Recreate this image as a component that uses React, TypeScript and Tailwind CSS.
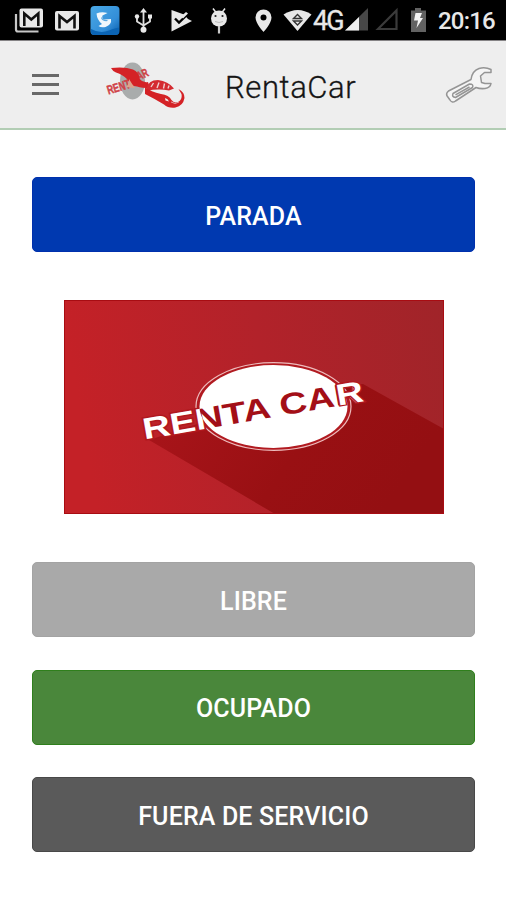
import { clsx } from "clsx";
import React from "react";

const STATUS_BUTTONS = [
  { id: "libre", label: "LIBRE", className: "bg-[#a9a9a9] border-[#a3a3a3]" },
  { id: "ocupado", label: "OCUPADO", className: "bg-[#4a873b] border-[#2f7f1c]" },
  { id: "fuera", label: "FUERA DE SERVICIO", className: "bg-[#5a5a5a] border-[#484848]" },
];

function ActionButton({ label, className }: { label: string; className: string }) {
  return (
    <button
      className={clsx(
        "flex h-[75px] w-full items-center justify-center rounded-[5px] border pt-1 text-[25px] font-medium tracking-[0.15px] text-white",
        className,
      )}
    >
      {label}
    </button>
  );
}

function StatusBar() {
  return (
    <div className="flex h-[41px] shrink-0 items-start border-b border-[#858385] bg-black text-[#e8e8e8]">
      {/* notifications */}
      <svg width="244" height="40" viewBox="0 0 244 40" className="shrink-0">
        {/* stacked mail */}
        <path d="M16 14v15.500q0 2 2 2H38.500" fill="none" stroke="#c8c8c8" strokeWidth="2.200" />
        <rect x="19.500" y="8.500" width="23.500" height="19" rx="2" fill="#e8e8e8" />
        <path d="M24.300 26V13.500l7 6 7-6V26" fill="none" stroke="#111" strokeWidth="2.600" />
        {/* mail */}
        <rect x="55" y="11" width="24" height="19.500" rx="2" fill="#e8e8e8" />
        <path d="M59.500 28.500V16l7.500 6 7.500-6v12.500" fill="none" stroke="#111" strokeWidth="2.600" />
        {/* app badge */}
        <defs>
          <linearGradient id="badge" x1="0" y1="0" x2="1" y2="1">
            <stop offset="0" stopColor="#4aa9e6" />
            <stop offset="0.65" stopColor="#338ed8" />
            <stop offset="1" stopColor="#075ba9" />
          </linearGradient>
        </defs>
        <rect x="90.500" y="6" width="29" height="29" rx="4" fill="url(#badge)" />
        <path d="M91 29q9 5 18 1.500T119 28v4q0 3-4 3H94q-3 0-3-3z" fill="#0b64b4" />
        <path
          d="M96.500 13.500q5-2 11-.5l-5 2.500q-1 2.500 1.500 4l7-.5q1 5.500-5.500 8-4.500 1-7-1l3.500-2q-5-4-5.500-10.500z"
          fill="#f0f7fc"
        />
        <path d="M101.500 17.500q1 3.500 6 3" fill="none" stroke="#5ea8df" strokeWidth="1.200" />
        {/* usb */}
        <g fill="none" stroke="#e0e0e0" strokeWidth="1.800">
          <path d="M143.500 30V11M137 17v4.500l6.500 4M150 17v4.500l-6.500 4" />
        </g>
        <path d="M143.500 8l3.500 4.500h-7z" fill="#e8e8e8" />
        <circle cx="137" cy="16.500" r="2.200" fill="#e8e8e8" />
        <rect x="148" y="14.500" width="4" height="4" fill="#e8e8e8" />
        <circle cx="143.500" cy="29.800" r="3" fill="#e8e8e8" />
        {/* play check */}
        <path d="M171.500 10v21.500l20.500-10.500-4-2-4-4.500z" fill="#e8e8e8" />
        <path d="M175 18.500l4 4 11-10.500" fill="none" stroke="#000" strokeWidth="2.400" />
        <path d="M181 16.500l5-4.500 2 1.500-5 5z" fill="#e8e8e8" />
        {/* lollipop */}
        <path d="M213 8.500l3 4M225 8.500l-3 4" stroke="#e8e8e8" strokeWidth="1.500" />
        <circle cx="219" cy="18.500" r="8" fill="#e8e8e8" />
        <path d="M219 26v7.500" stroke="#c9c9c9" strokeWidth="2.200" />
        <circle cx="215.500" cy="16" r="1.100" fill="#222" />
        <circle cx="222.500" cy="16" r="1.100" fill="#222" />
        <path d="M215 21.500q4 2 8 0" fill="none" stroke="#bbb" strokeWidth="1" />
      </svg>

      {/* location and wifi */}
      <svg width="69" height="40" viewBox="244 0 69 40" className="shrink-0">
        <path
          d="M263.500 9.500a8 8 0 0 0-8 8c0 6 8 14.500 8 14.500s8-8.500 8-14.500a8 8 0 0 0-8-8z"
          fill="#e8e8e8"
        />
        <circle cx="263.500" cy="17.500" r="3" fill="#000" />
        <path d="M283.500 14.500q14.500-9 28 0L297.500 31z" fill="#e8e8e8" />
        <path
          d="M293.500 18.500l4-4 4 4zM293.500 21h8l-4 4z"
          fill="none"
          stroke="#333"
          strokeWidth="1.400"
        />
      </svg>
      <span className="mt-[5px] w-8 text-[27px] leading-[32px] tracking-[-1.900px] [-webkit-text-stroke:0.3px_#e8e8e8]">
        4G
      </span>

      {/* signal and battery */}
      <svg width="93" height="40" viewBox="345 0 93 40" className="shrink-0">
        <path d="M345 30.500L368 8v22.500z" fill="#474747" />
        <path d="M345 30.500L359 17v13.500z" fill="#efefef" />
        <path d="M378 29L396.500 10.500V29z" fill="none" stroke="#3b3b3b" strokeWidth="2.200" />
        <path d="M411 10.500h4V8h6v2.500h5V32h-15z" fill="#626262" />
        <path d="M415.500 13h6.500l-2 5h3l-6.500 10 1.500-7.500h-4z" fill="#f4f4f4" />
      </svg>
      <time className="mt-[5px] text-[24px] font-medium leading-[32px] tracking-[-0.800px]">
        20:16
      </time>
    </div>
  );
}

function CarLogo() {
  return (
    <svg width="82" height="52" viewBox="106 59 82 52">
      <ellipse cx="132.500" cy="81" rx="12.500" ry="18.500" fill="#a9acac" />
      {/* lettering */}
      <g fill="#d04247" stroke="#d04247" strokeWidth="0.500" fontFamily="Liberation Sans" fontWeight="700">
        <text transform="translate(108.500 94.500) rotate(-17)" fontSize="12.500" textLength="24" lengthAdjust="spacingAndGlyphs">
          RENT
        </text>
        <text transform="translate(134 83) rotate(-26)" fontSize="12" textLength="17" lengthAdjust="spacingAndGlyphs">
          CAR
        </text>
      </g>
      {/* wing */}
      <path
        d="M111 68Q125 66.500 133 69.500 139 72 139.500 79 143 83 148 82L150 88Q142 88 137 86.500 130 86 128 80 123 74.500 116 72.500 112.500 71 111 68z"
        fill="#d42226"
      />
      <path d="M129 79q0 5-3 8l9 1q-3-4-6-9z" fill="#dda38b" />
      {/* windows */}
      <path
        d="M146.500 89Q148 80 158 80 168 81 174 88.500L169 90.500Q158 88.500 146.500 91z"
        fill="#d42b30"
      />
      <path
        d="M151 87l2.500-4M157 88l2-5.500M163.500 88.500l1-5M168 88.500l1-3"
        fill="none"
        stroke="#edd0d0"
        strokeWidth="1.400"
      />
      {/* body */}
      <path
        d="M145 87Q151 92 161 94 169 95 171.500 100 174 104 179 101.500 182.500 98.500 181.500 94L178.500 89Q184.500 92 184.500 98 183 106 175.500 107.500 168.500 108.500 164 104.500 155 99 145 94z"
        fill="#d42226"
      />
      <path d="M165 98q3 .5 4 3.500l-3.500-1z" fill="#eeeeee" />
      <path d="M171 102q4 3 8 0" fill="none" stroke="#e4a3a5" strokeWidth="1" />
    </svg>
  );
}

function WrenchIcon() {
  return (
    <svg
      width="50"
      height="40"
      viewBox="444 65 50 40"
      fill="none"
      stroke="#959595"
      strokeWidth="1.500"
      strokeLinejoin="round"
    >
      <path
        d="M448.500 91L471 79.500Q472 71 479 68.500 485 66.500 491 69.500V72.500H484.500L480.500 76 481.500 82.500 485 83.500H491Q490.500 87.500 485 88.500 480 89 476 87.500L455.500 101Q452 103.500 450 100L446.800 95.500Q446 93 448.500 91z"
        fill="#f5f5f5"
      />
      <path d="M453 93.500L469.500 84Q474 84 472.500 87.500L455.500 97.500Q451.500 97 453 93.500z" />
      <path d="M455.500 94.800L469.500 87" />
    </svg>
  );
}

function Header() {
  return (
    <header className="flex h-[89px] shrink-0 items-center border-b-2 border-[#b2cdb4] bg-[#eeeeee]">
      {/* menu */}
      <button className="ml-8 flex w-[27px] flex-col gap-[6px]">
        <span className="h-[3px] bg-[#686868]" />
        <span className="h-[3px] bg-[#686868]" />
        <span className="h-[3px] bg-[#686868]" />
      </button>
      <div className="ml-[47px]">
        <CarLogo />
      </div>
      <h1 className="ml-[37px] w-[219px] pt-[5px] text-[31px] font-light leading-none tracking-[0.6px] text-[#151515] [-webkit-text-stroke:0.3px_#151515]">
        RentaCar
      </h1>
      <WrenchIcon />
    </header>
  );
}

function Banner() {
  return (
    <svg width="380" height="214" viewBox="64 300 380 214" className="mx-auto block">
      <defs>
        <linearGradient id="bg" x1="0" y1="0.100" x2="1" y2="0">
          <stop offset="0" stopColor="#c42127" />
          <stop offset="0.5" stopColor="#b2222a" />
          <stop offset="1" stopColor="#a02429" />
        </linearGradient>
        <linearGradient id="shade" x1="0" y1="0" x2="1" y2="0.300">
          <stop offset="0" stopColor="#ab151b" />
          <stop offset="0.600" stopColor="#991013" />
          <stop offset="1" stopColor="#940f12" />
        </linearGradient>
        <clipPath id="oval">
          <ellipse cx="273.500" cy="406.500" rx="74" ry="41.500" />
        </clipPath>
      </defs>
      <rect x="64" y="300" width="380" height="214" fill="url(#bg)" />
      <path d="M149 440L275 514H444V429L363 384 300 390z" fill="url(#shade)" />
      <ellipse cx="273.500" cy="406.500" rx="77.500" ry="43.800" fill="#b11a20" stroke="#edbcbd" strokeWidth="1.200" />
      <g fontFamily="Liberation Sans" fontWeight="700" fontSize="30">
        <text
          transform="translate(144.500 439.500) rotate(-9.900)"
          textLength="222"
          lengthAdjust="spacingAndGlyphs"
          fill="#fff"
          stroke="#b1181e"
          strokeWidth="3"
          paintOrder="stroke"
        >
          RENTA CAR
        </text>
        <ellipse cx="273.500" cy="406.500" rx="74" ry="41.500" fill="#fff" />
        <g clipPath="url(#oval)">
          <text
            transform="translate(144.500 439.500) rotate(-9.900)"
            textLength="222"
            lengthAdjust="spacingAndGlyphs"
            fill="#a30f17"
          >
            RENTA CAR
          </text>
        </g>
        {/* last letter stays white over the oval */}
        <text
          transform="translate(338 405.700) rotate(-9.900)"
          textLength="27.200"
          lengthAdjust="spacingAndGlyphs"
          fill="#fff"
          stroke="#b1181e"
          strokeWidth="2.400"
          paintOrder="stroke"
        >
          R
        </text>
      </g>
      <rect x="64.500" y="300.500" width="379" height="213" fill="none" stroke="#a80c12" />
    </svg>
  );
}

export default function App() {
  return (
    <div className="flex h-[900px] w-[506px] flex-col overflow-hidden bg-white font-['Roboto',sans-serif]">
      <StatusBar />
      <Header />

      {/* content */}
      <main className="flex flex-col px-8 pr-[31px] pt-[46.8px]">
        <ActionButton label="PARADA" className="border-[#0030ad] bg-[#0039b0]" />
        <div className="py-12">
          <Banner />
        </div>
        {/* driver status */}
        <div className="flex flex-col gap-[32.8px]">
          {STATUS_BUTTONS.map((button) => (
            <ActionButton key={button.id} label={button.label} className={button.className} />
          ))}
        </div>
      </main>
    </div>
  );
}
